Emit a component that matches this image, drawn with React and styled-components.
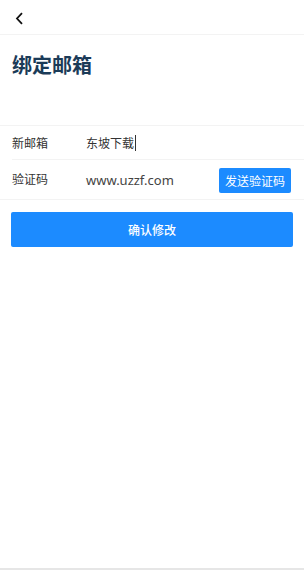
import React from "react";
import styled, { createGlobalStyle } from "styled-components";

const Global = createGlobalStyle`
  html, body { margin: 0; padding: 0; background: #fff; }
  body { font-family: "Noto Sans CJK SC", "Noto Sans", sans-serif; color: #333; }
  * { box-sizing: border-box; }
`;

const Page = styled.div`
  height: 100vh;
  display: flex;
  flex-direction: column;
  border-bottom: 2px solid #e6e6e6;
`;

const Header = styled.div`
  height: 35px;
  border-bottom: 1px solid #f3f3f3;
  display: flex;
  align-items: center;
  padding-left: 15px;
`;

const BackIcon = styled.svg`
  width: 9px;
  height: 13px;
  margin-top: 2px;
`;

const TitleArea = styled.div`
  height: 90px;
  padding: 16px 12px 0;
`;

const Title = styled.h1`
  margin: 0;
  font-size: 20px;
  line-height: 28px;
  font-weight: 700;
  color: #1b3b58;
`;

const Form = styled.div`
  border-top: 1px solid #f3f3f3;
  border-bottom: 1px solid #f3f3f3;
`;

const Row = styled.div`
  padding-left: 12px;
`;

const RowInner = styled.div`
  height: ${(p) => p.$h}px;
  display: flex;
  align-items: center;
  padding-right: 13px;
  border-bottom: ${(p) => (p.$divider ? "1px solid #f3f3f3" : "none")};
`;

const Label = styled.div`
  width: 74px;
  font-size: 12px;
  color: #333;
  margin-top: ${(p) => p.$shift || 0}px;
`;

const Value = styled.div`
  flex: 1;
  font-size: 12px;
  color: #333;
  display: flex;
  align-items: center;
`;

const UrlValue = styled(Value)`
  font-family: "Noto Sans", sans-serif;
  font-size: 13px;
  color: #444;
`;

const Caret = styled.span`
  display: inline-block;
  width: 1px;
  height: 16px;
  background: #333;
  margin-left: 1px;
`;

const SendButton = styled.button`
  width: 72px;
  height: 25px;
  border: none;
  border-radius: 2px;
  background: #1c8bff;
  color: #fff;
  font-family: inherit;
  font-size: 12px;
  padding: 0;
  margin-top: 2px;
`;

const Confirm = styled.button`
  margin: 12px 11px 0;
  height: 35px;
  border: none;
  border-radius: 2px;
  background: #1c8bff;
  color: #fff;
  font-family: inherit;
  font-size: 12px;
  font-weight: 500;
`;

export default function App() {
  return (
    <>
      <Global />
      <Page>
        <Header>
          <BackIcon viewBox="0 0 9 13">
            <path d="M7 1.2 L2 6.5 L7 11.8" fill="none" stroke="#111" strokeWidth="1.8" />
          </BackIcon>
        </Header>
        <TitleArea>
          <Title>绑定邮箱</Title>
        </TitleArea>
        <Form>
          <Row>
            <RowInner $h={34} $divider>
              <Label>新邮箱</Label>
              <Value>
                东坡下载
                <Caret />
              </Value>
            </RowInner>
          </Row>
          <Row>
            <RowInner $h={39}>
              <Label $shift={-3}>验证码</Label>
              <UrlValue>www.uzzf.com</UrlValue>
              <SendButton>发送验证码</SendButton>
            </RowInner>
          </Row>
        </Form>
        <Confirm>确认修改</Confirm>
      </Page>
    </>
  );
}
